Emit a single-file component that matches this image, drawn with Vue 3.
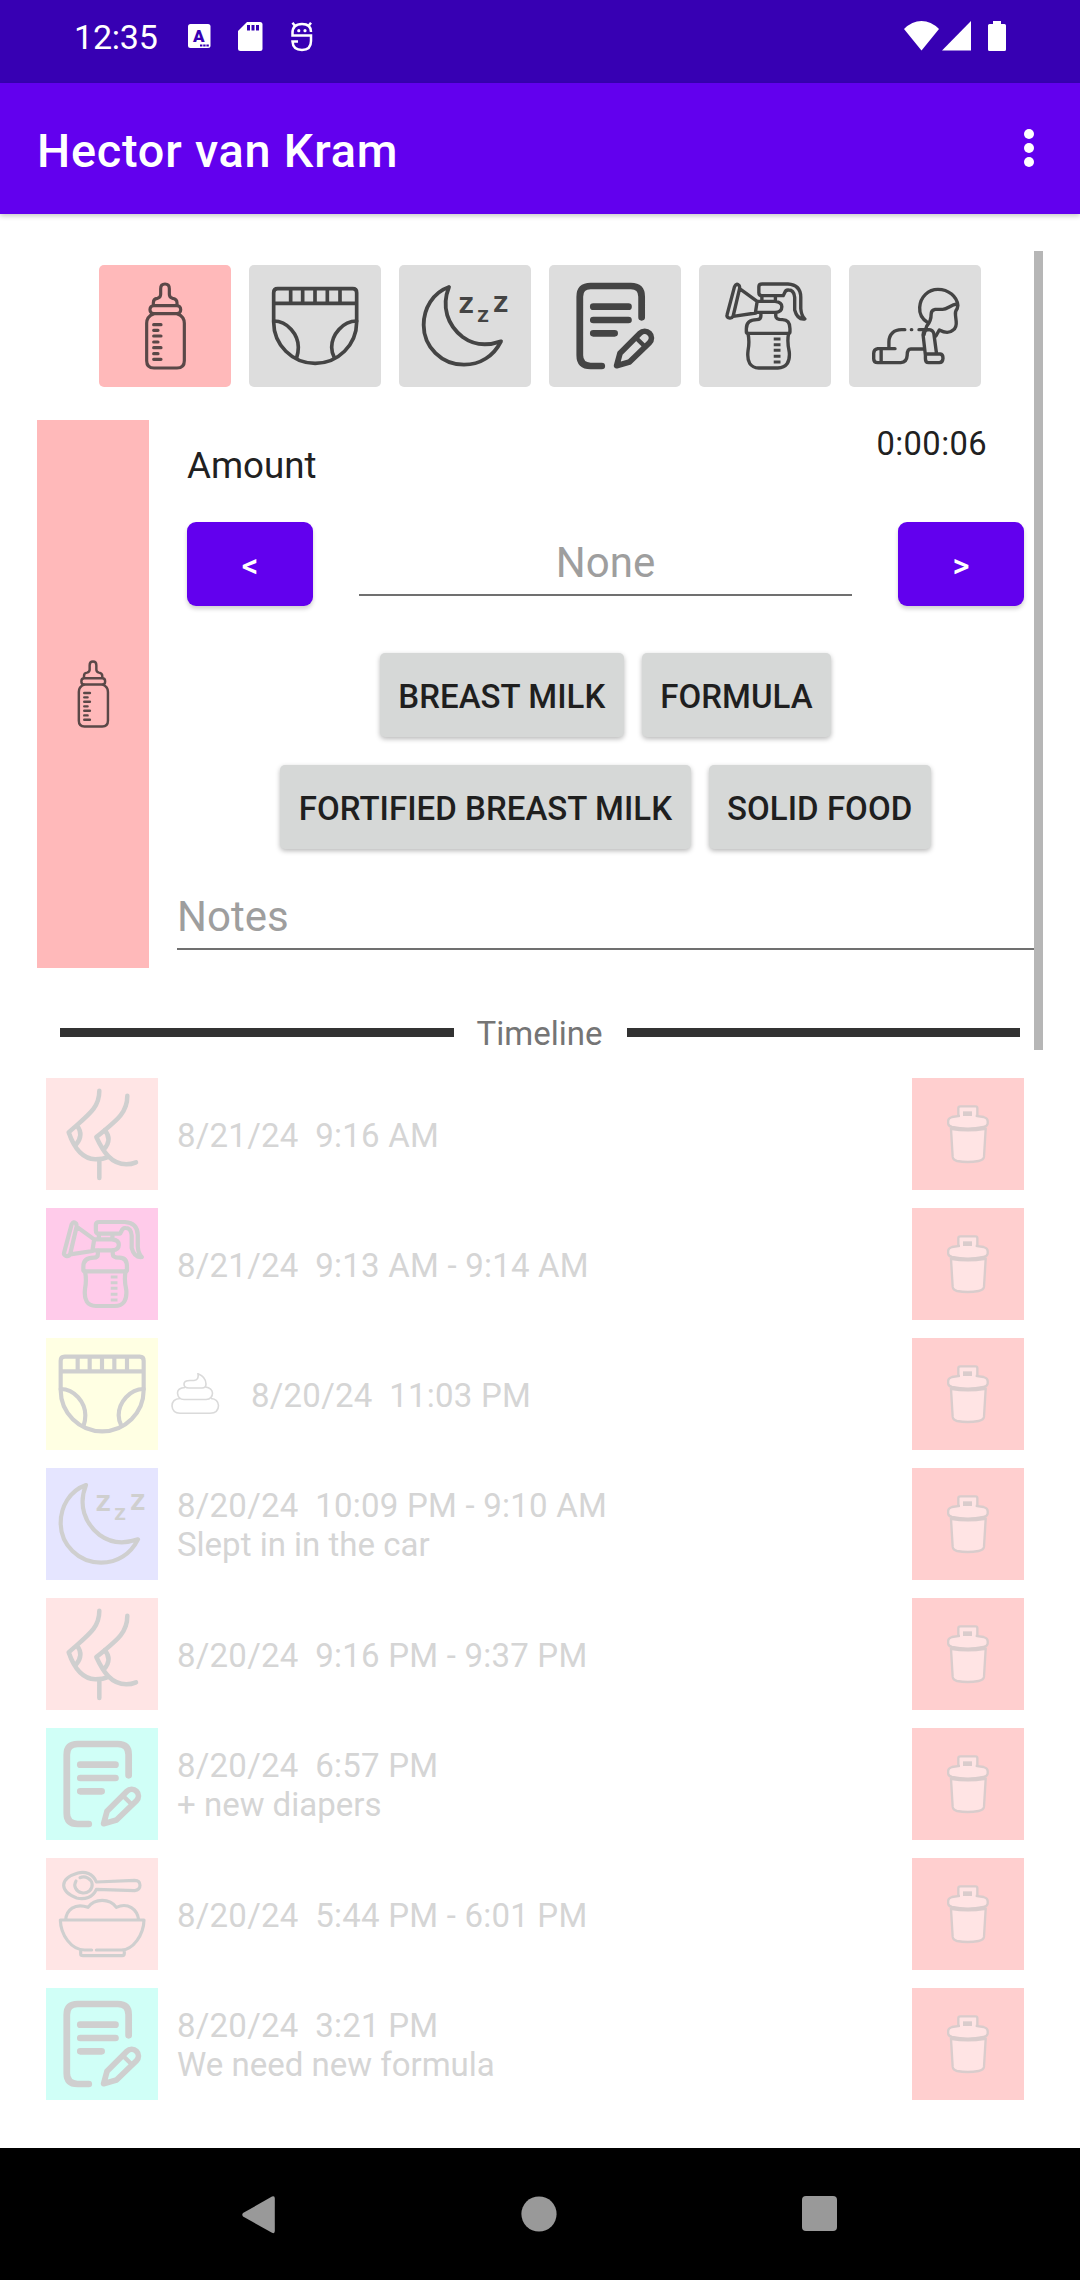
<script setup>
const icons = {
  bottle: `<g stroke-width="9.500"><path d="M97 66v-4q0-12 12-13q10-2 10-12V20q0-14 13-14q13 0 13 14V37q0 10 10 12q13 2 13 13v6"/><rect x="87" y="71" width="92" height="24" rx="11"/><path d="M97 96Q77 104 77 124V236Q77 258 99 258H168Q190 258 190 236V124Q190 104 170 96"/><path d="M98 128H120M98 145H111M98 162H120M98 180H111M98 197H120M98 215H111M98 232H120"/></g>`,
  diaper: `<g class="fine" stroke-width="11"><path d="M8 32Q8 20 20 20H245Q257 20 257 32V120A124.500 124 0 0 1 8 120ZM8 64H257M59 20V64M95 20V64M132 20V64M169 20V64M207 20V64"/><path d="M8 117C50 117 82 158 82 196Q82 212 77 227M257 117C215 117 182 158 182 196Q182 212 190 227"/></g>`,
  sleep: `<path class="fine" stroke-width="11.500" d="M84 15C35 32 8 80 8 129C8 195 62 248 129 248C178 248 218 222 240 178C205 190 163 193 125 165C80 130 60 75 84 15Z"/><g fill="currentColor" stroke="none" font-family="DejaVu Sans, sans-serif" font-weight="700"><text x="113" y="94" font-size="62">Z</text><text x="169" y="120" font-size="48">Z</text><text x="217" y="91" font-size="62">Z</text></g>`,
  note: `<g transform="scale(1.014 1)"><path stroke-width="20" d="M209 106V44Q209 12 177 12H58Q26 12 26 44V220Q26 252 58 252H91M66 74H170M66 114H170M66 154H129"/><path stroke-width="17" d="M135 251L145 214L204 154A19 19 0 0 1 232 182L173 240Z"/><path stroke-width="13" d="M192 167L217 192"/></g>`,
  pump: `<g class="fine" stroke-width="10" transform="scale(1.014 1)"><path d="M40 14Q46 2 53 10Q56 14 55 20L36 102Q32 110 24 108Q16 105 18 98ZM55 20L107 58M36 103L103 93M107 58L102 91M107 58H160Q180 60 180 74Q180 90 160 91H102M121 45V57M161 45V57"/><path d="M184 41H122Q112 41 112 32V14Q112 6 122 6H198Q235 8 236 45V80Q238 102 248 111Q226 114 218 84V46Q216 24 200 24Q191 23 188 33Z"/><path d="M118 92V102Q118 113 106 113Q75 113 75 140V150Q75 154 80 154H200Q204 154 204 150V140Q204 113 182 113Q162 113 162 102V92"/><path d="M80 154Q85 180 80 206Q74 257 112 258H168Q206 257 202 210Q195 180 200 154"/><path stroke-linecap="butt" stroke-width="9" d="M156 171H176M156 188H176M156 205H176M156 223H176M156 240H176"/></g>`,
  crawl: `<g stroke-width="10" transform="scale(1.014 1)"><path d="M167 121C150 110 143 92 144 76C146 44 170 22 198 22C230 22 254 44 257 70L255 80Q248 88 250 100L252 118Q254 136 243 144Q228 158 202 144L192 162"/><path d="M254 66C235 68 225 84 210 82H190Q178 84 178 96Q178 118 165 132Q160 145 157 158"/><path d="M53 199V180C53 157 68 143 90 143H100M119.500 143H120.500M142 143H170M71 200H20Q8 202 8 214V230Q8 242 20 242H88Q106 240 107 220Q107 201 118 201H155M30 201V242"/><path d="M154 160Q154 143 170 143Q183 143 186 155L194 216M154 158L161 220M161 216H205Q213 217 213 229Q212 242 202 242H170Q161 242 161 230V216"/></g>`,
  breast: `<g stroke-width="13.500"><path d="M124 2C124 55 90 75 32 127C50 180 75 207 112 208Q135 208 152 200M58 108Q78 135 54 164M208 17C208 70 175 92 115 141C135 185 160 223 205 223Q220 223 234 217M140 120Q164 148 138 178M124 210V264"/></g>`,
  food: `<g stroke-width="9.500"><path d="M115 36C105 10 80 3 60 9C32 17 17 30 17 46C17 62 35 76 56 84C80 90 105 82 115 58L230 62Q246 60 246 46Q246 31 230 31ZM66 23A26 24 0 1 1 54 33"/><path d="M23 150C25 120 50 98 90 112C110 84 155 84 175 112C210 96 238 118 242 150M101 240H80C40 240 8 195 7 150H258C257 195 225 240 190 240H115M68 240V252Q68 257 75 257H193Q199 257 199 250V240"/></g>`,
}

const actions = ['bottle', 'diaper', 'sleep', 'note', 'pump', 'crawl']

const entries = [
  { icon: 'breast', tint: 'feed', time: '8/21/24  9:16 AM' },
  { icon: 'pump', tint: 'pumping', time: '8/21/24  9:13 AM - 9:14 AM' },
  { icon: 'diaper', tint: 'change', time: '8/20/24  11:03 PM', poo: true },
  { icon: 'sleep', tint: 'rest', time: '8/20/24  10:09 PM - 9:10 AM', note: 'Slept in in the car' },
  { icon: 'breast', tint: 'feed', time: '8/20/24  9:16 PM - 9:37 PM' },
  { icon: 'note', tint: 'memo', time: '8/20/24  6:57 PM', note: '+ new diapers' },
  { icon: 'food', tint: 'feed', time: '8/20/24  5:44 PM - 6:01 PM' },
  { icon: 'note', tint: 'memo', time: '8/20/24  3:21 PM', note: 'We need new formula' },
]
</script>

<template>
  <div class="screen">
    <header class="status">
      <span class="clock">12:35</span>
      <svg class="st-a" width="23" height="24" viewBox="0 0 23 24">
        <rect width="22.500" height="24" rx="2.500" fill="#fff" />
        <text x="5" y="18" font-family="Roboto, sans-serif" font-weight="900" font-size="17" fill="#3700b3">A</text>
        <path d="M12 20.500h2.400v2H12zM15.200 20.500h2.400v2h-2.400zM18.400 20.500h2.400v2h-2.400z" fill="#3700b3" />
      </svg>
      <svg class="st-sd" width="25" height="29" viewBox="0 0 25 29">
        <path d="M9 0H22Q24.500 0 24.500 2.500V26.500Q24.500 29 22 29H2.500Q0 29 0 26.500V9Z" fill="#fff" />
        <path d="M9 3h3v5.500H9zM13.500 3h3v5.500h-3zM18 3h3v5.500h-3z" fill="#3700b3" />
      </svg>
      <svg class="st-face" width="22" height="30" viewBox="0 0 22 30">
        <path d="M20 10Q20 2 11 2Q1.500 2 1.500 11V13.500H20V19Q20 28 11 28Q2 28 1.500 19.500H7M1.500 .800L4 4M20 .800L17.500 4" fill="none" stroke="#fff" stroke-width="2.500" />
        <circle cx="7.800" cy="8.700" r="1.600" fill="#fff" /><circle cx="14" cy="8.700" r="1.600" fill="#fff" />
      </svg>
      <svg class="st-right" width="102" height="31" viewBox="0 0 102 31" fill="#fff">
        <path d="M0 8Q8 0 17.500 0T35 8L17.500 29.500Z" />
        <path d="M38 29.500L67 0V29.500Z" />
        <path d="M89 0h8v3h3.500q1.500 0 1.500 1.500v24q0 1.500-1.500 1.500h-15q-1.500 0-1.500-1.500v-24q0-1.500 1.500-1.500H89z" />
      </svg>
    </header>

    <div class="appbar">
      <h1>Hector van Kram</h1>
      <div class="menu"><i></i><i></i><i></i></div>
    </div>

    <main>
      <div class="scrollbar"></div>
      <nav class="actions">
        <button v-for="(a, i) in actions" :key="a" class="action" :class="{ active: i === 0 }">
          <svg class="icon" viewBox="0 0 264 264" v-html="icons[a]"></svg>
        </button>
      </nav>

      <section class="editor">
        <div class="stripe"><svg class="icon small" viewBox="0 0 264 264" v-html="icons.bottle"></svg></div>
        <div class="form">
          <div class="form-head">
            <label>Amount</label>
            <span class="timer">0:00:06</span>
          </div>
          <div class="stepper">
            <button class="step">&lt;</button>
            <div class="field amount">None</div>
            <button class="step">&gt;</button>
          </div>
          <div class="kinds">
            <div class="kind-row"><button>BREAST MILK</button><button>FORMULA</button></div>
            <div class="kind-row"><button>FORTIFIED BREAST MILK</button><button>SOLID FOOD</button></div>
          </div>
          <div class="field notes">Notes</div>
        </div>
      </section>

      <div class="divider"><hr /><span>Timeline</span><hr /></div>

      <ul class="timeline">
        <li v-for="(e, i) in entries" :key="i">
          <div class="badge" :class="e.tint"><svg class="icon" viewBox="0 0 264 264" v-html="icons[e.icon]"></svg></div>
          <svg v-if="e.poo" class="poo" width="50" height="42" viewBox="0 0 50 42">
            <path d="M27 .800Q35 4 35 11Q35 15 31 15H18Q13 15 13 11Q13 7.500 19 7.500H23Q28 7 27 .800ZM14 14.500Q6.500 15 6.500 20Q7 26.500 13 26.500H35Q41.500 26 41.500 20Q41 15 34.500 14M9 25.500Q1 26 1 33Q1.500 40 9 40.300H39Q47.500 40 47.500 32.500Q47 26 40 25.500" />
          </svg>
          <div class="text"><p class="when">{{ e.time }}</p><p v-if="e.note">{{ e.note }}</p></div>
          <button class="delete">
            <svg width="42" height="59" viewBox="0 0 126 177">
              <g fill="#ffe4e4" stroke="#d9cccc" stroke-width="7">
                <path d="M12 72L17 155Q18 165 30 168Q62 174 95 168Q110 165 111 155L116 72Z" />
                <path d="M34 36V9Q34 4 40 4H86Q91 4 91 9V36" />
                <path d="M3.500 56V47Q3.500 40 15 36Q62 27 110 36Q122 40 122 48V56Q120 64 110 66Q62 76 15 66Q4 63 3.500 56Z" />
              </g>
              <path d="M11 69Q62 80 115 69" fill="none" stroke="#d9cccc" stroke-width="10" />
              <path d="M39 16H86V38H39Z" fill="#ffe4e4" />
              <path d="M48 19H75V33H48Z" fill="#d9cccc" />
            </svg>
          </button>
        </li>
      </ul>
    </main>

    <footer class="navbar">
      <svg width="33" height="38" viewBox="0 0 33 38"><path d="M30 .600Q32.800-.500 32.800 2.500V35Q32.800 38 30 36.800L1 20.500Q-.500 18.800 1 17Z" /></svg>
      <svg width="36" height="36" viewBox="0 0 36 36"><circle cx="18" cy="18" r="17.600" /></svg>
      <svg width="35" height="35" viewBox="0 0 35 35"><rect width="35" height="35" rx="4" /></svg>
    </footer>
  </div>
</template>

<style>
body { margin: 0; background: #fff; }
</style>

<style scoped>
* { box-sizing: border-box; }
.screen { width: 1080px; height: 2280px; display: flex; flex-direction: column; background: #fff; font-family: Roboto, sans-serif; color: #212121; overflow: hidden; }
button { border: 0; padding: 0; margin: 0; font: inherit; display: flex; align-items: center; justify-content: center; }
p, h1, ul { margin: 0; padding: 0; list-style: none; }
svg { display: block; flex: none; }

.status { height: 83px; background: #3700b3; color: #fff; display: flex; align-items: flex-start; padding: 0 74px 0 74px; }
.clock { font-size: 34px; line-height: 40px; padding-top: 17px; width: 114px; letter-spacing: -.2px; }
.st-a { margin-top: 24px; }
.st-sd { margin: 22px 0 0 27px; }
.st-face { margin: 22px 0 0 28px; }
.st-right { margin: 21px 0 0 auto; }

.appbar { height: 131px; background: #6200ee; color: #fff; display: flex; align-items: center; justify-content: space-between; padding: 0 46px 0 37px; box-shadow: 0 2px 5px rgba(0, 0, 0, .22); position: relative; }
h1 { font-size: 46.750px; font-weight: 500; line-height: 56px; padding-top: 5px; letter-spacing: .8px; }
.menu { display: flex; flex-direction: column; gap: 4px; padding-bottom: 2px; }
.menu i { width: 10px; height: 10px; border-radius: 50%; background: #fff; }

main { flex: 1; position: relative; padding: 51px 37px 0; }
.scrollbar { position: absolute; left: 1034px; top: 37px; width: 9px; height: 799px; background: #b6b6b6; z-index: 2; }

.icon { width: 88px; height: 88px; overflow: visible; fill: none; stroke: currentColor; stroke-linecap: round; stroke-linejoin: round; }
.icon.small { width: 68px; height: 68px; }

.actions { display: flex; gap: 18px; justify-content: center; padding-bottom: 33px; }
.action { width: 132px; height: 122px; border-radius: 5px; background: #ddd; color: #444; }
.action.active { background: #ffb9ba; color: #5a4848; }

.editor { display: flex; height: 548px; }
.stripe { width: 112px; background: #ffb9ba; color: #5a4848; display: flex; align-items: center; justify-content: center; }
.form { flex: 1; padding-left: 28px; margin-right: 9px; }
.form-head { display: flex; justify-content: space-between; padding: 0 47px 0 10px; height: 102px; }
label { font-size: 36.700px; line-height: 44px; padding-top: 24px; }
.timer { font-size: 32.700px; line-height: 38px; padding-top: 5px; letter-spacing: .4px; }
.stepper { display: flex; justify-content: space-between; padding: 0 10px 0 10px; height: 131px; }
.step { width: 126px; height: 84px; border-radius: 9px; background: #6200ee; color: #fff; font-size: 32.700px; font-weight: 500; padding-top: 3px; box-shadow: 0 3px 4px rgba(0, 0, 0, .18); }
.field { color: #9e9e9e; font-size: 42px; border-bottom: 2px solid #707070; }
.amount { width: 493px; height: 74px; line-height: 50px; padding-top: 16px; text-align: center; }
.kinds { display: flex; flex-direction: column; gap: 28px; }
.kind-row { display: flex; justify-content: center; gap: 18px; }
.kind-row button { height: 84px; padding: 3px 18.500px 0; border-radius: 5px; background: #d6d8d7; color: #1f1f1f; font-size: 33px; font-weight: 500; letter-spacing: .04px; box-shadow: 0 2px 5px rgba(0, 0, 0, .28); white-space: nowrap; }
.notes { margin-top: 43px; height: 58px; line-height: 50px; }

.divider { display: flex; align-items: center; height: 110px; padding: 19px 23px 0; }
hr { flex: 1; height: 9px; margin: 0; border: 0; background: #323232; }
.divider span { font-size: 33px; line-height: 38px; color: #757575; width: 173px; text-align: center; padding: 2px 1px 0 0; }

.timeline { padding: 0 19px 0 9px; display: flex; flex-direction: column; gap: 18px; }
li { display: flex; align-items: center; height: 112px; }
.badge { width: 112px; height: 112px; color: #cfcfcf; display: flex; align-items: center; justify-content: center; flex: none; }
.badge :deep(.fine) { stroke-width: 12.500px; }
.feed { background: #ffe5e5; }
.pumping { background: #ffcbea; }
.change { background: #ffffe3; }
.rest { background: #e5e5ff; }
.memo { background: #d0fff7; }
.poo { margin: 0 11px 0 13px; fill: none; stroke: #dadada; stroke-width: 1.600; }
.text { flex: 1; padding: 2px 0 0 19px; font-size: 33px; line-height: 39px; color: #d5d5d5; white-space: pre; }
.when { letter-spacing: .22px; }
.delete { width: 112px; height: 112px; background: #ffcfcf; flex: none; }

.navbar { height: 132px; background: #000; display: flex; align-items: flex-start; justify-content: space-between; padding: 48px 243px 0 242px; }
.navbar svg { fill: #999; }
</style>
